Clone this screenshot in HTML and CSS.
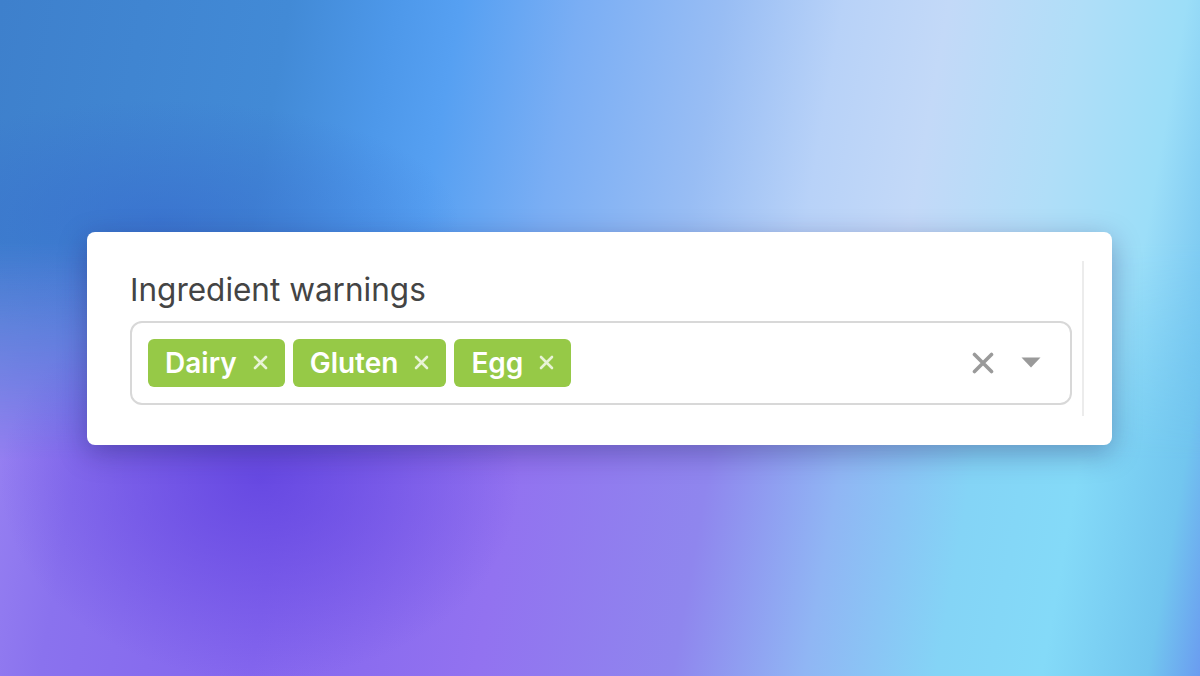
FILE: index.html
```html
<!DOCTYPE html>
<html lang="en">
<head>
<meta charset="utf-8">
<title>Ingredient warnings</title>
<link rel="stylesheet" href="styles.css">
</head>
<body>
<div class="bg"></div>
<main class="card">
  <div class="field">
    <label class="label">Ingredient warnings</label>
    <div class="select">
      <div class="values">
        <span class="tag"><span class="tag-text">Dairy</span><span class="tag-x" aria-label="remove">
          <svg width="15" height="15" viewBox="0 0 15 15"><path d="M2 2L13 13M13 2L2 13" stroke="currentColor" stroke-width="2.6" stroke-linecap="round"/></svg></span></span>
        <span class="tag"><span class="tag-text">Gluten</span><span class="tag-x" aria-label="remove">
          <svg width="15" height="15" viewBox="0 0 15 15"><path d="M2 2L13 13M13 2L2 13" stroke="currentColor" stroke-width="2.6" stroke-linecap="round"/></svg></span></span>
        <span class="tag"><span class="tag-text">Egg</span><span class="tag-x" aria-label="remove">
          <svg width="15" height="15" viewBox="0 0 15 15"><path d="M2 2L13 13M13 2L2 13" stroke="currentColor" stroke-width="2.6" stroke-linecap="round"/></svg></span></span>
      </div>
      <div class="indicators">
        <span class="clear">
          <svg width="22" height="22" viewBox="0 0 22 22"><path d="M2.5 2.5L19.5 19.5M19.5 2.5L2.5 19.5" stroke="currentColor" stroke-width="3.6" stroke-linecap="round"/></svg>
        </span>
        <span class="caret">
          <svg width="20" height="11" viewBox="0 0 20 11"><path d="M0.5 0.5H19.5L10 10.5Z" fill="currentColor"/></svg>
        </span>
      </div>
    </div>
  </div>
</main>
</body>
</html>
```
FILE: styles.css
```css
* { box-sizing: border-box; }
html, body { margin: 0; padding: 0; }
body {
  height: 676px;
  overflow: hidden;
  display: flex;
  align-items: center;
  justify-content: center;
  font-family: Inter, "Liberation Sans", sans-serif;
  position: relative;
  background:
    radial-gradient(ellipse 260px 200px at 260px 480px, rgba(100,70,225,0.9), rgba(100,70,225,0) 100%),
    linear-gradient(100deg, #a08cf4 0%, #8a72ee 12%, #8466ee 28%, #9272f0 45%, #8f86ee 60%, #90b6f4 70%, #84d4f6 80%, #84daf8 88%, #72c6ef 96%, #6a9cf0 100%);
}
.bg {
  position: absolute;
  inset: 0;
  background:
    radial-gradient(ellipse 300px 120px at 160px 220px, rgba(55,105,205,0.6), rgba(55,105,205,0) 100%),
    linear-gradient(100deg, #3e80cc 0%, #428ad6 22%, #4d98ea 30%, #56a0f2 35%, #7aaef4 44%, #98bdf4 55%, #b8d2f8 64%, #c3d9f8 72%, #b0def8 82%, #9cdef8 90%, #74c4f0 96%, #62a0ee 100%);
  -webkit-mask-image: linear-gradient(to bottom, #000 0%, #000 36%, transparent 68%);
  mask-image: linear-gradient(to bottom, #000 0%, #000 36%, transparent 68%);
}
.card {
  position: relative;
  width: 1025px;
  height: 213px;
  margin-left: -1px;
  background: #fff;
  border-radius: 8px;
  box-shadow: 0 8px 28px rgba(30, 20, 90, 0.35);
  padding: 29px 28px 29px 43px;
  display: flex;
}
.field {
  flex: 1;
  border-right: 2px solid #ececec;
  padding-right: 10px;
  display: flex;
  flex-direction: column;
}
.label {
  display: block;
  font-size: 31.5px;
  font-weight: 400;
  color: #444;
  line-height: 38px;
  height: 60px;
  padding-top: 10px;
}
.select {
  height: 84px;
  border: 2px solid #d8d8d8;
  border-radius: 12px;
  padding: 16px;
  display: flex;
  align-items: center;
}
.values {
  flex: 1;
  display: flex;
  gap: 8px;
}
.tag {
  height: 48px;
  background: #96c947;
  border-radius: 6px;
  color: #fff;
  display: flex;
  align-items: center;
  padding: 0 17px 0 17px;
}
.tag-text {
  font-size: 28px;
  font-weight: 600;
}
.tag-x {
  display: flex;
  margin-left: 16px;
  color: rgba(255,255,255,0.78);
}
.indicators {
  display: flex;
  align-items: center;
  margin-right: 13px;
}
.clear, .caret {
  display: flex;
  color: #9a9a9a;
}
.caret { margin-left: 27px; }
```
